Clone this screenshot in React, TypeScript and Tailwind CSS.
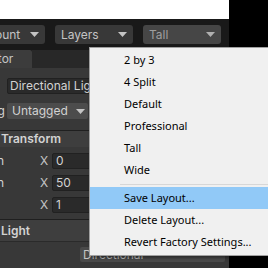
import React from 'react';

const Caret: React.FC<{ className?: string }> = ({ className }) => (
  <svg width="9" height="5" viewBox="0 0 9 5" className={className}>
    <path d="M0 0 L9 0 L4.5 5 Z" fill="currentColor" />
  </svg>
);

const ToolbarButton: React.FC<{ label: string; dim?: boolean }> = ({ label, dim }) => (
  <div
    className={`flex items-center justify-between w-[78px] h-[19px] rounded-[3px] pl-[6px] pr-[6px] shrink-0 ${
      dim ? 'bg-[#464646] text-[#9e9e9e]' : 'bg-[#383838] text-[#c4c4c4]'
    }`}
  >
    <span className="text-[12px] leading-none">{label}</span>
    <Caret className={dim ? 'text-[#b0b0b0]' : 'text-[#c4c4c4]'} />
  </div>
);

const menuItems = ['2 by 3', '4 Split', 'Default', 'Professional', 'Tall', 'Wide'];
const layoutActions = ['Save Layout...', 'Delete Layout...', 'Revert Factory Settings...'];

const vectorRows = [
  { label: 'Position', value: '0' },
  { label: 'Rotation', value: '50' },
  { label: 'Scale', value: '1' },
];

export default function App() {
  return (
    <div className="relative w-[268px] h-[268px] overflow-hidden bg-black font-['Inter',sans-serif]">
      <div className="flex w-[268px] h-[268px]">
        {/* editor window */}
        <div className="flex flex-col w-[229px] shrink-0 h-full">
          <div className="h-[19px] bg-white" />

          {/* toolbar */}
          <div className="flex items-start h-[28px] bg-[#191919] pt-[6px] overflow-hidden">
            <div className="ml-[-33px] flex gap-[10px]">
              <ToolbarButton label="Account" />
              <ToolbarButton label="Layers" />
              <ToolbarButton label="Tall" dim />
            </div>
          </div>

          {/* tab bar */}
          <div className="flex h-[21px] bg-[#191919]">
            <div className="w-[32px] mt-[3px] bg-[#3c3c3c] text-[#c4c4c4] text-[12px] flex items-center overflow-hidden rounded-tr-[2px]">
              <span className="ml-[-40px] whitespace-nowrap">Inspector</span>
            </div>
            <div className="flex-1 mt-[3px] bg-[#282828]" />
          </div>

          {/* inspector */}
          <div className="flex-1 flex flex-col bg-[#383838] text-[#d2d2d2] text-[12px]">
            <div className="h-[10px]" />
            <div className="ml-[7px] h-[16px] bg-[#2a2a2a] border border-[#212121] rounded-[2px] flex items-center pl-[2px] leading-none">
              Directional Light
            </div>
            <div className="h-[9px]" />
            <div className="flex items-center h-[16px]">
              <span className="w-[7px] ml-[-16px] whitespace-nowrap">Tag</span>
              <div className="ml-[16px] w-[81px] h-[16px] bg-[#4c4c4c] rounded-[2px] flex items-center justify-between pl-[5px] pr-[3px]">
                <span>Untagged</span>
                <Caret className="text-[#c4c4c4]" />
              </div>
            </div>
            <div className="h-[11px]" />
            <div className="h-px bg-[#1f1f1f]" />
            <div className="h-[16px] bg-[#3e3e3e] flex items-center pl-[1px] font-semibold">Transform</div>
            <div className="h-[6px]" />
            <div className="flex flex-col gap-[6px]">
              {vectorRows.map((r) => (
                <div key={r.label} className="flex items-center h-[16px]">
                  <div className="w-[40px] overflow-hidden flex justify-end pr-[36px] whitespace-nowrap">
                    <span className={r.label === 'Scale' ? 'invisible' : ''}>{r.label}</span>
                  </div>
                  <span className="w-[12px] text-[#c4c4c4]">X</span>
                  <div className="flex-1 h-[16px] bg-[#2a2a2a] border border-[#212121] rounded-[2px] flex items-center pl-[3px] mr-[4px]">
                    {r.value}
                  </div>
                </div>
              ))}
            </div>
            <div className="h-[6px]" />
            <div className="h-px bg-[#1f1f1f]" />
            <div className="h-[21px] bg-[#3e3e3e] flex items-center pl-[1px] font-semibold">Light</div>
            <div className="h-px bg-[#2a2a2a]" />
            <div className="h-[5px]" />
            <div className="ml-[80px] w-[145px] h-[15px] bg-[#4a4a4a] rounded-[2px] flex items-center pl-[3px] text-[#c4c4c4]">
              Directional
            </div>
          </div>
        </div>
        <div className="flex-1 bg-black" />
      </div>

      {/* layout dropdown menu */}
      <div className="absolute left-[89px] top-[47px] w-[185px] h-[209px] bg-[#f0f0f0] border border-[#a0a0a0] shadow-[2px_2px_3px_rgba(0,0,0,0.45)] py-[1px] font-['Noto_Sans',sans-serif] text-[11px] text-black">
        {menuItems.map((m) => (
          <div key={m} className="h-[22px] flex items-center pl-[34px]">
            {m}
          </div>
        ))}
        <div className="h-[6px] flex items-center pl-[30px]">
          <div className="h-px w-full bg-[#d7d7d7]" />
        </div>
        {layoutActions.map((m, i) => (
          <div key={m} className={`h-[22px] flex items-center pl-[34px] ${i === 0 ? 'bg-[#91c9f7]' : ''}`}>
            {m}
          </div>
        ))}
      </div>
    </div>
  );
}
